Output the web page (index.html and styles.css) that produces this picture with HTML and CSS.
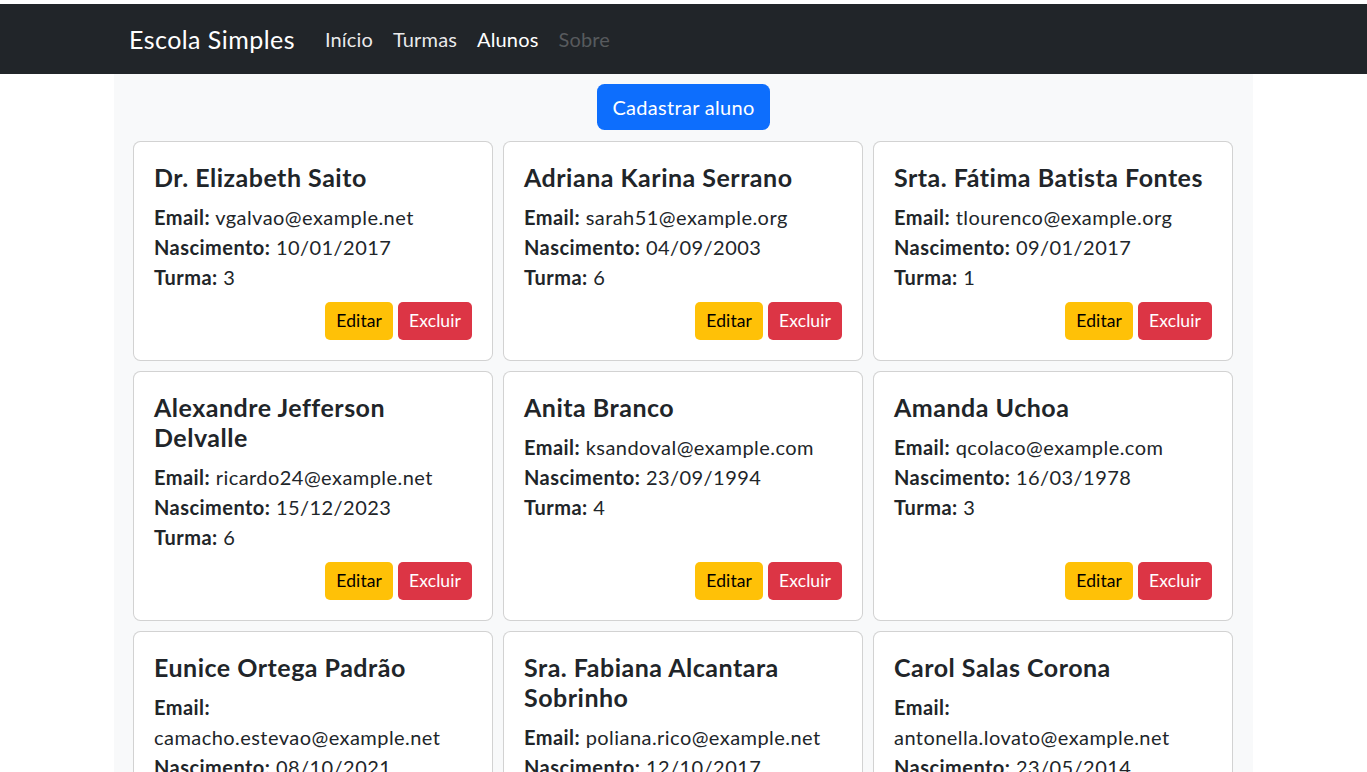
FILE: index.html
```html
<!DOCTYPE html>
<html lang="pt-BR">
<head>
<meta charset="utf-8">
<title>Escola Simples</title>
<link rel="stylesheet" href="styles.css">
</head>
<body>
<nav class="navbar">
  <div class="nav-inner">
    <a class="brand" href="#">Escola Simples</a>
    <ul class="nav-links">
      <li><a class="nav-link" href="#">Início</a></li>
      <li><a class="nav-link" href="#">Turmas</a></li>
      <li><a class="nav-link active" href="#">Alunos</a></li>
      <li><a class="nav-link disabled" href="#">Sobre</a></li>
    </ul>
  </div>
</nav>
<main class="main">
  <div class="actions">
    <button class="btn btn-primary">Cadastrar aluno</button>
  </div>
  <div class="grid">
    <div class="card"><div class="card-body">
      <h5 class="card-title">Dr. Elizabeth Saito</h5>
      <p class="info"><strong>Email:</strong> vgalvao@example.net</p>
      <p class="info"><strong>Nascimento:</strong> 10/01/2017</p>
      <p class="info"><strong>Turma:</strong> 3</p>
      <div class="card-actions"><button class="btn btn-sm btn-warning">Editar</button><button class="btn btn-sm btn-danger">Excluir</button></div>
    </div></div>
    <div class="card"><div class="card-body">
      <h5 class="card-title">Adriana Karina Serrano</h5>
      <p class="info"><strong>Email:</strong> sarah51@example.org</p>
      <p class="info"><strong>Nascimento:</strong> 04/09/2003</p>
      <p class="info"><strong>Turma:</strong> 6</p>
      <div class="card-actions"><button class="btn btn-sm btn-warning">Editar</button><button class="btn btn-sm btn-danger">Excluir</button></div>
    </div></div>
    <div class="card"><div class="card-body">
      <h5 class="card-title">Srta. Fátima Batista Fontes</h5>
      <p class="info"><strong>Email:</strong> tlourenco@example.org</p>
      <p class="info"><strong>Nascimento:</strong> 09/01/2017</p>
      <p class="info"><strong>Turma:</strong> 1</p>
      <div class="card-actions"><button class="btn btn-sm btn-warning">Editar</button><button class="btn btn-sm btn-danger">Excluir</button></div>
    </div></div>
    <div class="card"><div class="card-body">
      <h5 class="card-title">Alexandre Jefferson Delvalle</h5>
      <p class="info"><strong>Email:</strong> ricardo24@example.net</p>
      <p class="info"><strong>Nascimento:</strong> 15/12/2023</p>
      <p class="info"><strong>Turma:</strong> 6</p>
      <div class="card-actions"><button class="btn btn-sm btn-warning">Editar</button><button class="btn btn-sm btn-danger">Excluir</button></div>
    </div></div>
    <div class="card"><div class="card-body">
      <h5 class="card-title">Anita Branco</h5>
      <p class="info"><strong>Email:</strong> ksandoval@example.com</p>
      <p class="info"><strong>Nascimento:</strong> 23/09/1994</p>
      <p class="info"><strong>Turma:</strong> 4</p>
      <div class="card-actions"><button class="btn btn-sm btn-warning">Editar</button><button class="btn btn-sm btn-danger">Excluir</button></div>
    </div></div>
    <div class="card"><div class="card-body">
      <h5 class="card-title">Amanda Uchoa</h5>
      <p class="info"><strong>Email:</strong> qcolaco@example.com</p>
      <p class="info"><strong>Nascimento:</strong> 16/03/1978</p>
      <p class="info"><strong>Turma:</strong> 3</p>
      <div class="card-actions"><button class="btn btn-sm btn-warning">Editar</button><button class="btn btn-sm btn-danger">Excluir</button></div>
    </div></div>
    <div class="card"><div class="card-body">
      <h5 class="card-title">Eunice Ortega Padrão</h5>
      <p class="info"><strong>Email:</strong> camacho.estevao@example.net</p>
      <p class="info"><strong>Nascimento:</strong> 08/10/2021</p>
      <p class="info"><strong>Turma:</strong> 2</p>
      <div class="card-actions"><button class="btn btn-sm btn-warning">Editar</button><button class="btn btn-sm btn-danger">Excluir</button></div>
    </div></div>
    <div class="card"><div class="card-body">
      <h5 class="card-title">Sra. Fabiana Alcantara Sobrinho</h5>
      <p class="info"><strong>Email:</strong> poliana.rico@example.net</p>
      <p class="info"><strong>Nascimento:</strong> 12/10/2017</p>
      <p class="info"><strong>Turma:</strong> 5</p>
      <div class="card-actions"><button class="btn btn-sm btn-warning">Editar</button><button class="btn btn-sm btn-danger">Excluir</button></div>
    </div></div>
    <div class="card"><div class="card-body">
      <h5 class="card-title">Carol Salas Corona</h5>
      <p class="info"><strong>Email:</strong> antonella.lovato@example.net</p>
      <p class="info"><strong>Nascimento:</strong> 23/05/2014</p>
      <p class="info"><strong>Turma:</strong> 1</p>
      <div class="card-actions"><button class="btn btn-sm btn-warning">Editar</button><button class="btn btn-sm btn-danger">Excluir</button></div>
    </div></div>
  </div>
</main>
</body>
</html>
```

FILE: styles.css
```css
* { box-sizing: border-box; }
html, body { margin: 0; padding: 0; }
body {
  padding-top: 4px;
  font-family: Lato, "Open Sans", sans-serif;
  font-size: 20px;
  line-height: 30px;
  letter-spacing: 0.45px;
  color: #212529;
  background: #fff;
}
.navbar {
  background: #212529;
  height: 70px;
  display: flex;
  align-items: center;
}
.nav-inner {
  width: 1139px;
  margin: 0 auto;
  padding: 0 15px;
  display: flex;
  align-items: center;
}
.brand {
  color: #fff;
  text-decoration: none;
  font-size: 25px;
  line-height: 37px;
  margin-right: 20px;
}
.nav-links {
  list-style: none;
  margin: 0;
  padding: 0;
  display: flex;
}
.nav-link {
  display: block;
  padding: 10px;
  color: rgba(255,255,255,.92);
  text-decoration: none;
  letter-spacing: 0.15px;
}
.nav-link.active { color: #fff; }
.nav-link.disabled { color: rgba(255,255,255,.25); }
.main {
  width: 1139px;
  margin: 0 auto;
  background: #f8f9fa;
  padding-top: 10px;
  min-height: 698px;
}
.actions {
  display: flex;
  justify-content: center;
  margin-bottom: 11px;
}
.btn {
  font-family: inherit;
  border: 1px solid transparent;
  cursor: pointer;
}
.btn-primary {
  background: #0d6efd;
  color: #fff;
  font-size: 20px;
  line-height: 30px;
  padding: 7px 14px;
  letter-spacing: 0.3px;
  border-radius: 7.5px;
}
.grid {
  display: grid;
  grid-template-columns: repeat(3, 360px);
  padding-left: 19px;
  gap: 10px 10px;
}
.card {
  background: #fff;
  border: 1px solid rgba(0,0,0,.175);
  border-radius: 7.5px;
  display: flex;
}
.card-body {
  padding: 20px;
  display: flex;
  flex-direction: column;
  width: 100%;
}
.card-title {
  margin: 0 0 10px;
  font-size: 25px;
  line-height: 30px;
  font-weight: 700;
  letter-spacing: 0.5px;
}
.info { margin: 0; }
.info strong { font-weight: 700; }
.card-actions {
  margin-top: auto;
  padding-top: 10px;
  display: flex;
  justify-content: flex-end;
  gap: 5px;
}
.btn-sm {
  font-size: 17.5px;
  line-height: 26px;
  padding: 5px 10px;
  letter-spacing: 0.1px;
  border-radius: 5px;
}
.btn-warning { background: #ffc107; color: #000; }
.btn-danger { background: #dc3545; color: #fff; }
```
